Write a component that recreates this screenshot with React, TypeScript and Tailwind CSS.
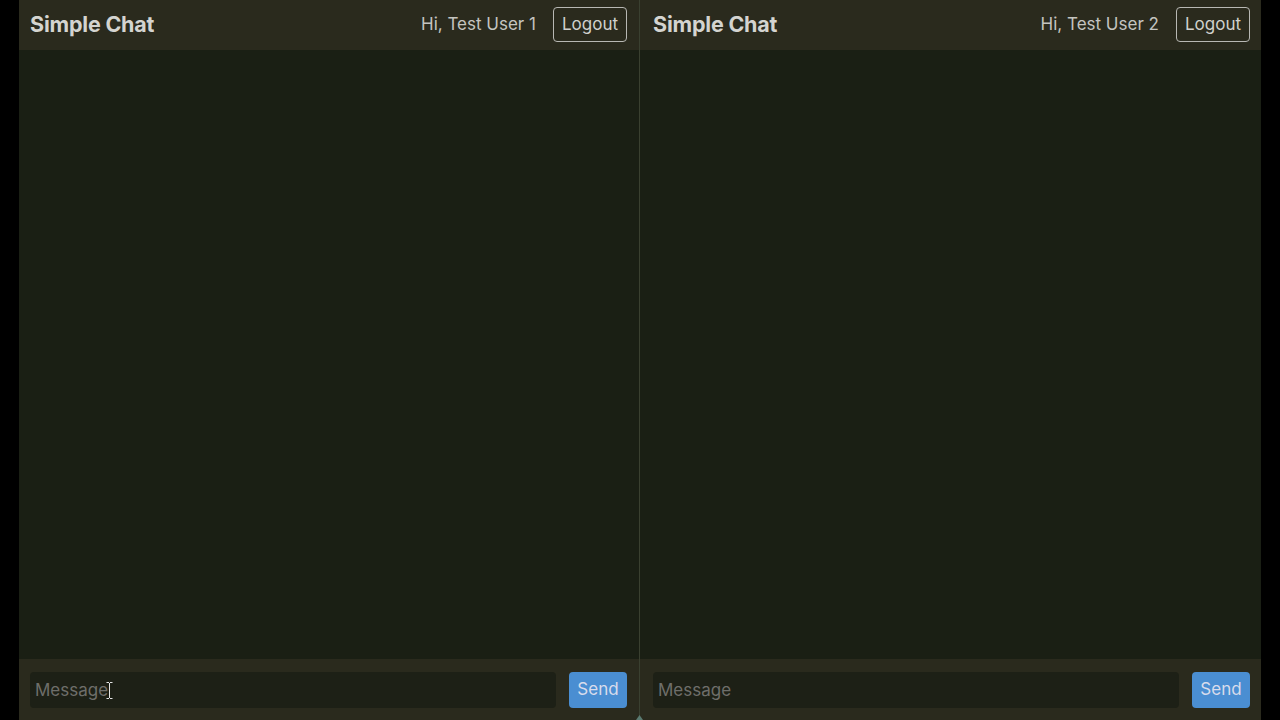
import React from "react";

function Pane({ user, showCursor, pad }: { user: string; showCursor?: boolean; pad: string }) {
  return (
    <div className={"flex flex-col min-w-0 " + (showCursor ? "w-[620px]" : "flex-1")}>
      <div className={"h-[50px] shrink-0 bg-[#2a2a1d] flex items-center justify-between pb-[1px] " + pad}>
        <div className="text-[21.5px] font-bold text-[#d4d4d0] tracking-[-0.2px]">Simple Chat</div>
        <div className="flex items-center">
          <span className="text-[17px] text-[#c4c4c0] mr-[17px]">Hi, {user}</span>
          <button className="h-[35px] px-[8px] rounded-[4px] border border-[#b8b8b4] text-[17px] text-[#d0d0cc] bg-transparent">
            Logout
          </button>
        </div>
      </div>
      <div className="flex-1 bg-[#1a1f14]" />
      <div className={"h-[61px] shrink-0 bg-[#2a2a1d] flex items-center gap-[13px] pt-[1px] " + pad}>
        <div className="relative flex-1 h-[36px]">
          <input
            className="w-full h-full rounded-[4px] bg-[#1d2016] px-[5px] text-[17px] text-[#ddd] placeholder-[#6e6e6a] outline-none"
            placeholder="Message"
          />
          {showCursor && (
            <svg className="absolute left-[76px] top-[10px]" width="7" height="17" viewBox="0 0 7 17">
              <path d="M0.5 0.5h2.5M4 0.5h2.5M3.5 1v15M0.5 16.5h2.5M4 16.5h2.5" stroke="#e4e4e4" strokeWidth="1" fill="none" />
            </svg>
          )}
        </div>
        <button className="w-[58px] h-[36px] rounded-[4px] bg-[#4a8ed2] text-[17px] text-[#d8dcec]">Send</button>
      </div>
    </div>
  );
}

export default function App() {
  return (
    <div className="w-full h-[720px] bg-black flex justify-center font-['Inter','Noto_Sans',sans-serif] overflow-hidden">
      <div className="w-[1242px] flex">
        <Pane user="Test User 1" showCursor pad="pl-[11px] pr-[12px]" />
        <div className="relative w-px shrink-0 bg-[#3a4030]">
          <svg className="absolute left-[-3px] bottom-0" width="7" height="5" viewBox="0 0 7 5">
            <path d="M3.5 0L7 5H0z" fill="#5a7a70" />
          </svg>
        </div>
        <Pane user="Test User 2" pad="pl-[13px] pr-[11px]" />
      </div>
    </div>
  );
}
